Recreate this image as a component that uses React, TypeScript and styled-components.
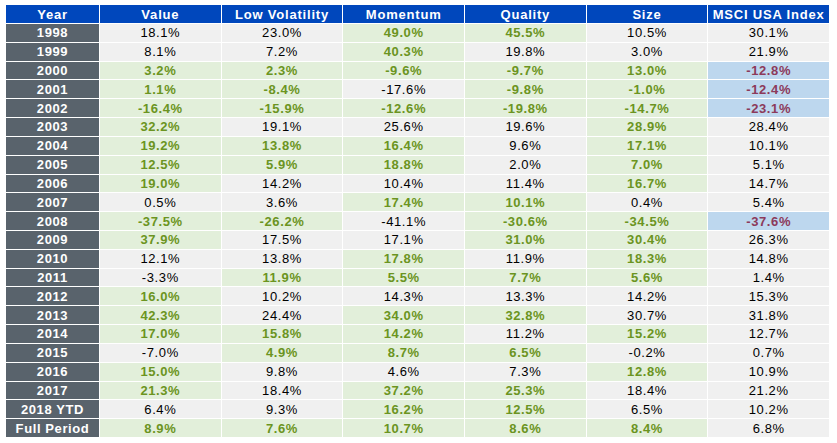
import React from 'react';
import styled, { createGlobalStyle } from 'styled-components';

const GlobalStyle = createGlobalStyle`
  html, body {
    margin: 0;
    padding: 0;
    background: #fff;
  }
  body {
    font-family: "Liberation Sans", Arial, sans-serif;
  }
`;

const Page = styled.div`
  padding: 5px 0 0 6px;
`;

const Table = styled.div`
  display: grid;
  grid-template-columns: 93px repeat(6, 1fr);
  grid-template-rows: 18px repeat(22, 1fr);
  gap: 1px;
  width: 823px;
  height: 432px;
`;

const HeadCell = styled.div`
  display: flex;
  align-items: center;
  justify-content: center;
  background: #0047bc;
  color: #fff;
  font-weight: bold;
  font-size: 13px;
  letter-spacing: 0.8px;
  white-space: nowrap;
`;

const YearCell = styled.div`
  display: flex;
  align-items: center;
  justify-content: center;
  background: #59636c;
  color: #fff;
  font-weight: bold;
  font-size: 13px;
  letter-spacing: 0.6px;
  white-space: nowrap;
`;

type Tone = 'plain' | 'good' | 'bad';

const tones: Record<Tone, { bg: string; fg: string; weight: string }> = {
  plain: { bg: '#f0f0f0', fg: '#000', weight: 'normal' },
  good: { bg: '#e2efda', fg: '#6b9421', weight: 'bold' },
  bad: { bg: '#bdd7ee', fg: '#8c3a5a', weight: 'bold' },
};

const Cell = styled.div<{ $tone: Tone }>`
  display: flex;
  align-items: center;
  justify-content: center;
  background: ${({ $tone }) => tones[$tone].bg};
  color: ${({ $tone }) => tones[$tone].fg};
  font-weight: ${({ $tone }) => tones[$tone].weight};
  font-size: 13px;
  letter-spacing: 0.6px;
`;

const headers = ['Year', 'Value', 'Low Volatility', 'Momentum', 'Quality', 'Size', 'MSCI USA Index'];

// "*" marks a green (outperforming) cell, "!" a blue index drawdown cell
const rows: [string, string[]][] = [
  ['1998', ['18.1', '23.0', '*49.0', '*45.5', '10.5', '30.1']],
  ['1999', ['8.1', '7.2', '*40.3', '19.8', '3.0', '21.9']],
  ['2000', ['*3.2', '*2.3', '*-9.6', '*-9.7', '*13.0', '!-12.8']],
  ['2001', ['*1.1', '*-8.4', '-17.6', '*-9.8', '*-1.0', '!-12.4']],
  ['2002', ['*-16.4', '*-15.9', '*-12.6', '*-19.8', '*-14.7', '!-23.1']],
  ['2003', ['*32.2', '19.1', '25.6', '19.6', '*28.9', '28.4']],
  ['2004', ['*19.2', '*13.8', '*16.4', '9.6', '*17.1', '10.1']],
  ['2005', ['*12.5', '*5.9', '*18.8', '2.0', '*7.0', '5.1']],
  ['2006', ['*19.0', '14.2', '10.4', '11.4', '*16.7', '14.7']],
  ['2007', ['0.5', '3.6', '*17.4', '*10.1', '0.4', '5.4']],
  ['2008', ['*-37.5', '*-26.2', '-41.1', '*-30.6', '*-34.5', '!-37.6']],
  ['2009', ['*37.9', '17.5', '17.1', '*31.0', '*30.4', '26.3']],
  ['2010', ['12.1', '13.8', '*17.8', '11.9', '*18.3', '14.8']],
  ['2011', ['-3.3', '*11.9', '*5.5', '*7.7', '*5.6', '1.4']],
  ['2012', ['*16.0', '10.2', '14.3', '13.3', '14.2', '15.3']],
  ['2013', ['*42.3', '24.4', '*34.0', '*32.8', '30.7', '31.8']],
  ['2014', ['*17.0', '*15.8', '*14.2', '11.2', '*15.2', '12.7']],
  ['2015', ['-7.0', '*4.9', '*8.7', '*6.5', '-0.2', '0.7']],
  ['2016', ['*15.0', '9.8', '4.6', '7.3', '*12.8', '10.9']],
  ['2017', ['*21.3', '18.4', '*37.2', '*25.3', '18.4', '21.2']],
  ['2018 YTD', ['6.4', '9.3', '*16.2', '*12.5', '6.5', '10.2']],
  ['Full Period', ['*8.9', '*7.6', '*10.7', '*8.6', '*8.4', '6.8']],
];

const parse = (raw: string): [Tone, string] => {
  if (raw.startsWith('*')) return ['good', raw.slice(1)];
  if (raw.startsWith('!')) return ['bad', raw.slice(1)];
  return ['plain', raw];
};

const App: React.FC = () => (
  <Page>
    <GlobalStyle />
    <Table>
      {headers.map(h => <HeadCell key={h}>{h}</HeadCell>)}
      {rows.map(([year, vals]) => (
        <React.Fragment key={year}>
          <YearCell>{year}</YearCell>
          {vals.map((raw, i) => {
            const [tone, v] = parse(raw);
            return <Cell key={i} $tone={tone}>{v}%</Cell>;
          })}
        </React.Fragment>
      ))}
    </Table>
  </Page>
);

export default App;
